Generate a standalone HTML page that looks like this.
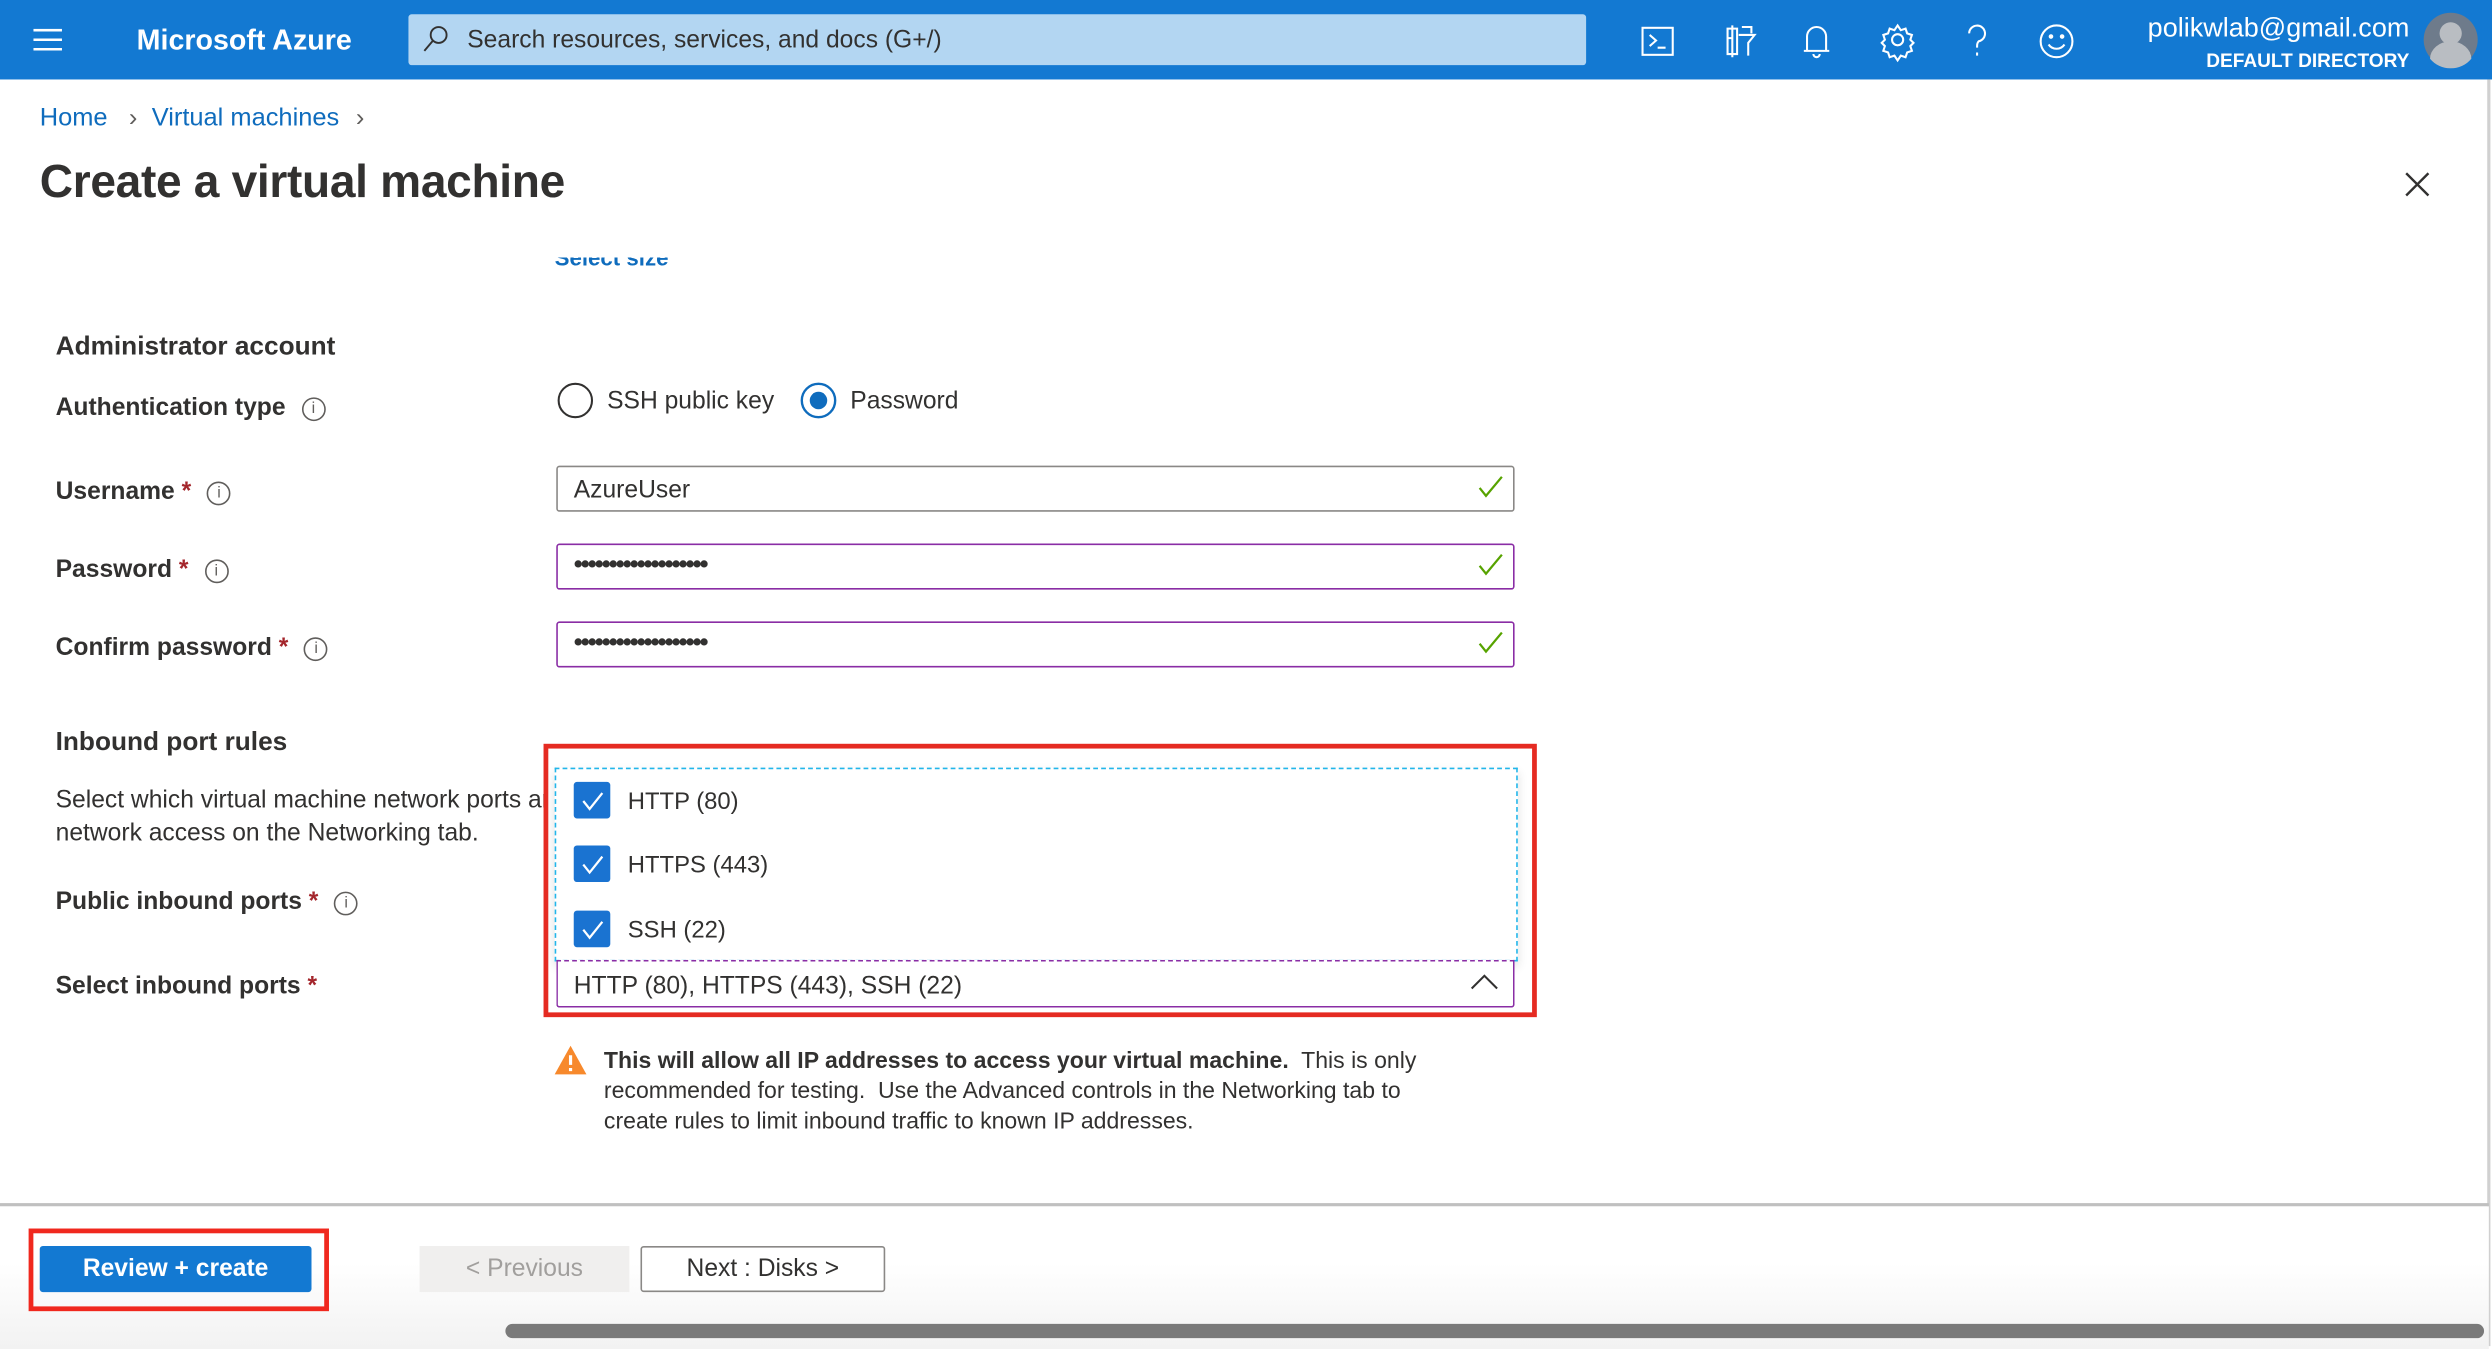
<!DOCTYPE html>
<html><head><meta charset="utf-8"><style>
html,body{margin:0;padding:0;width:2492px;height:1346px;overflow:hidden;background:#fff}
#w{position:absolute;left:0;top:0;width:1568px;height:847px;transform:scale(1.58929);transform-origin:0 0;font-family:"Liberation Sans",sans-serif;color:#323130}
.a{position:absolute;white-space:nowrap}
.lbl{font-size:15.5px;font-weight:bold;color:#323130}
.req{color:#a4262c}
.info{display:inline-block;width:13px;height:13px;border:1px solid #605e5c;border-radius:50%;font-size:10px;line-height:13px;text-align:center;font-weight:normal;color:#605e5c;vertical-align:1px;margin-left:10px}
.inp{position:absolute;left:350px;width:601px;height:27px;border:1px solid #8a8886;border-radius:2px;background:#fff}
.pur{border-color:#8a2da5}
.chk{position:absolute;right:6px;top:4px}
.cb{position:absolute;left:361px;width:23px;height:23px;background:#1a73d1;border-radius:2px}
.cbl{position:absolute;left:395px;font-size:15px}
.dots{position:absolute;left:10px;top:4px;font-size:16px;letter-spacing:-1.2px;font-weight:bold;color:#323130}
</style></head><body><div id="w">
<div class="a" style="left:0;top:0;width:1568px;height:50px;background:#1379d2"></div>
<svg class="a" style="left:21px;top:18px" width="18" height="14"><path d="M0 1H18M0 7H18M0 13H18" stroke="#fff" stroke-width="1.6"/></svg>
<div class="a" style="left:86px;top:15px;font-size:18px;font-weight:bold;color:#fff">Microsoft Azure</div>
<div class="a" style="left:257px;top:9px;width:741px;height:32px;background:#b3d6f2;border-radius:2px"></div>
<svg class="a" style="left:266px;top:16px" width="16" height="18"><circle cx="10" cy="6" r="5" fill="none" stroke="#323130" stroke-width="1.2"/><path d="M6.5 9.5L1 16" stroke="#323130" stroke-width="1.2"/></svg>
<div class="a" style="left:294px;top:17px;font-size:15.5px;color:#323130">Search resources, services, and docs (G+/)</div>
<svg class="a" style="left:1030px;top:12px" width="280" height="28" fill="none" stroke="#fff" stroke-width="1.3">
<rect x="3.5" y="5.5" width="19" height="17"/><path d="M8 10l4 3.5-4 3.5M13 18h5"/>
<path d="M57 6h6v16h-6zM60 4v20M66 5h6v4M64 10h10l-4 5v8M60 12h-3" />
<path d="M107 20V11a6 6 0 0 1 12 0v9zM105 20h16M111 22a2 2 0 0 0 4 0"/>
<circle cx="164" cy="13" r="3.5"/><path d="M164 4l2 3 3-1 1 3 3 1-1 3 2 2-2 2 1 3-3 1-1 3-3-1-2 3-2-3-3 1-1-3-3-1 1-3-2-2 2-2-1-3 3-1 1-3 3 1z"/>
<path d="M209 9a5 5 0 1 1 6 5c-1 1-1 2-1 4M214 21v2"/>
<circle cx="264" cy="14" r="10"/><circle cx="260.5" cy="11" r="0.8" fill="#fff"/><circle cx="267.5" cy="11" r="0.8" fill="#fff"/><path d="M259 16a6 6 0 0 0 10 0"/>
</svg>
<div class="a" style="right:52px;top:8px;font-size:17px;color:#fff">polikwlab@gmail.com</div>
<div class="a" style="right:52px;top:31px;font-size:12px;font-weight:bold;color:#fff">DEFAULT DIRECTORY</div>
<svg class="a" style="left:1524px;top:7px" width="36" height="36"><circle cx="18" cy="18" r="17" fill="#6e7b8b"/><circle cx="18" cy="14" r="7" fill="#b9bdc2"/><path d="M5 30a13 11 0 0 1 26 0a17 17 0 0 1-26 0z" fill="#b9bdc2"/></svg>
<div class="a" style="left:1565px;top:50px;width:2px;height:797px;background:#d0d0d0"></div>
<div class="a" style="left:25px;top:66px;font-size:16px;color:#0f6cbd">Home <span style="color:#605e5c;margin:0 9px">&#x203A;</span>Virtual machines <span style="color:#605e5c;margin-left:6px">&#x203A;</span></div>
<div class="a" style="left:25px;top:99px;font-size:29px;font-weight:bold;color:#323130;letter-spacing:-0.2px">Create a virtual machine</div>
<svg class="a" style="left:1513px;top:108px" width="16" height="16"><path d="M1 1L15 15M15 1L1 15" stroke="#323130" stroke-width="1.5"/></svg>
<div class="a" style="left:349px;top:162px;width:80px;height:10px;overflow:hidden"><div style="margin-top:-8px;font-size:14px;font-weight:bold;color:#0f6cbd">Select size</div></div>
<div class="a lbl" style="left:35px;top:209px;font-size:16.5px">Administrator account</div>
<div class="a lbl" style="left:35px;top:248px">Authentication type<span class="info">i</span></div>
<div class="a lbl" style="left:35px;top:301px">Username <span class="req">*</span><span class="info">i</span></div>
<div class="a lbl" style="left:35px;top:350px">Password <span class="req">*</span><span class="info">i</span></div>
<div class="a lbl" style="left:35px;top:399px">Confirm password <span class="req">*</span><span class="info">i</span></div>
<svg class="a" style="left:350px;top:239px" width="260" height="26"><circle cx="12" cy="13" r="10.5" fill="none" stroke="#323130" stroke-width="1.3"/><circle cx="165" cy="13" r="10.5" fill="none" stroke="#0f6cbd" stroke-width="1.5"/><circle cx="165" cy="13" r="5.5" fill="#0f6cbd"/></svg>
<div class="a" style="left:382px;top:244px;font-size:15.5px">SSH public key</div>
<div class="a" style="left:535px;top:244px;font-size:15.5px">Password</div>
<div class="inp" style="top:293px"><div class="a" style="left:10px;top:6px;font-size:15.5px">AzureUser</div><svg class="chk" width="16" height="16"><path d="M1 9l4 5L15 2" fill="none" stroke="#57a300" stroke-width="1.4"/></svg></div>
<div class="inp pur" style="top:342px"><div class="dots">&#8226;&#8226;&#8226;&#8226;&#8226;&#8226;&#8226;&#8226;&#8226;&#8226;&#8226;&#8226;&#8226;&#8226;&#8226;&#8226;&#8226;&#8226;&#8226;</div><svg class="chk" width="16" height="16"><path d="M1 9l4 5L15 2" fill="none" stroke="#57a300" stroke-width="1.4"/></svg></div>
<div class="inp pur" style="top:391px"><div class="dots">&#8226;&#8226;&#8226;&#8226;&#8226;&#8226;&#8226;&#8226;&#8226;&#8226;&#8226;&#8226;&#8226;&#8226;&#8226;&#8226;&#8226;&#8226;&#8226;</div><svg class="chk" width="16" height="16"><path d="M1 9l4 5L15 2" fill="none" stroke="#57a300" stroke-width="1.4"/></svg></div>
<div class="a lbl" style="left:35px;top:458px;font-size:16.5px">Inbound port rules</div>
<div class="a" style="left:35px;top:493px;font-size:15.5px;line-height:21px;width:307px;overflow:hidden">Select which virtual machine network ports are accessible<br>network access on the Networking tab.</div>
<div class="a lbl" style="left:35px;top:559px">Public inbound ports <span class="req">*</span><span class="info">i</span></div>
<div class="a lbl" style="left:35px;top:612px">Select inbound ports <span class="req">*</span></div>
<div class="a" style="left:349px;top:483px;width:604px;height:120px;background:#fff;border:1px dashed #22b6ea;box-shadow:0 3px 6px rgba(0,0,0,.12)"></div>
<div class="cb" style="top:492px"></div><div class="cb" style="top:532px"></div><div class="cb" style="top:573px"></div>
<svg class="a" style="left:361px;top:492px" width="23" height="104" fill="none" stroke="#fff" stroke-width="1.4"><path d="M6 12l4 5 8-10M6 52l4 5 8-10M6 93l4 5 8-10"/></svg>
<div class="cbl" style="top:496px">HTTP (80)</div>
<div class="cbl" style="top:536px">HTTPS (443)</div>
<div class="cbl" style="top:577px">SSH (22)</div>
<div class="a" style="left:350px;top:604px;width:601px;height:28px;border:1px solid #8a2da5;border-top:1px dashed #8a2da5;border-radius:0 0 2px 2px;background:#fff"></div>
<div class="a" style="left:361px;top:612px;font-size:15.5px">HTTP (80), HTTPS (443), SSH (22)</div>
<svg class="a" style="left:925px;top:612px" width="18" height="12"><path d="M1 10l8-8 8 8" fill="none" stroke="#323130" stroke-width="1.3"/></svg>
<div class="a" style="left:342px;top:468px;width:619px;height:166px;border:3px solid #e52b22"></div>
<svg class="a" style="left:348px;top:657px" width="22" height="20"><path d="M11 1L21 19H1z" fill="#f7892c"/><path d="M11 7v6M11 15v2" stroke="#fff" stroke-width="2"/></svg>
<div class="a" style="left:380px;top:659px;font-size:14.5px;line-height:19px;color:#323130"><b>This will allow all IP addresses to access your virtual machine.</b>&nbsp; This is only<br>recommended for testing.&nbsp; Use the Advanced controls in the Networking tab to<br>create rules to limit inbound traffic to known IP addresses.</div>
<div class="a" style="left:0;top:757px;width:1566px;height:90px;background:linear-gradient(#fff,#fff 40%,#f2f2f2);border-top:2px solid #c0c0c0"></div>
<div class="a" style="left:18px;top:773px;width:183px;height:46px;border:3px solid #f0281e"></div>
<div class="a" style="left:25px;top:784px;width:171px;height:29px;background:#1379d2;border-radius:2px;color:#fff;font-size:15.5px;font-weight:bold;text-align:center;line-height:29px">Review + create</div>
<div class="a" style="left:264px;top:784px;width:132px;height:29px;background:#f0efee;color:#a19f9d;font-size:15.5px;text-align:center;line-height:29px">&lt; Previous</div>
<div class="a" style="left:403px;top:784px;width:152px;height:27px;border:1px solid #8a8886;border-radius:2px;background:#fff;font-size:15.5px;text-align:center;line-height:27px">Next : Disks &gt;</div>
<div class="a" style="left:318px;top:833px;width:1245px;height:9px;background:#7a7a7a;border-radius:5px"></div>
</div></body></html>
